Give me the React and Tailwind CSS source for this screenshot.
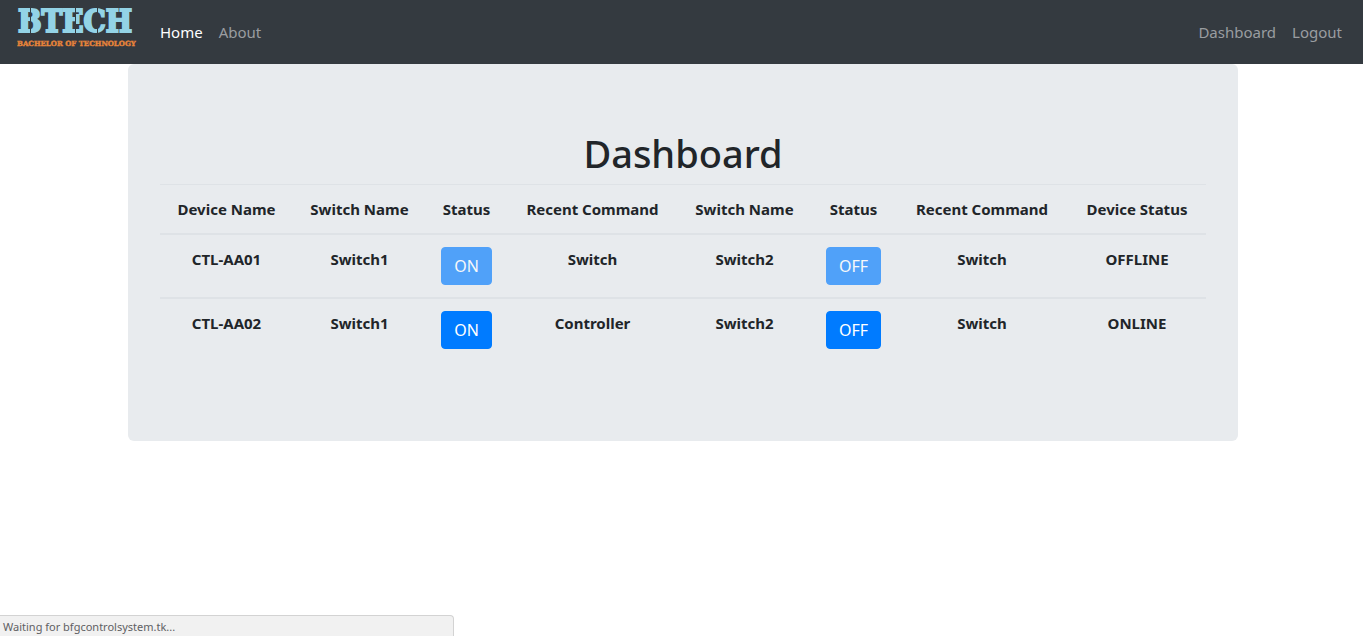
import React from "react";

const devices = [
  {
    name: "CTL-AA01",
    status: "OFFLINE",
    switches: [
      { name: "Switch1", state: "ON", recent: "Switch" },
      { name: "Switch2", state: "OFF", recent: "Switch" },
    ],
  },
  {
    name: "CTL-AA02",
    status: "ONLINE",
    switches: [
      { name: "Switch1", state: "ON", recent: "Controller" },
      { name: "Switch2", state: "OFF", recent: "Switch" },
    ],
  },
];

const headings = [
  "Device Name",
  "Switch Name",
  "Status",
  "Recent Command",
  "Switch Name",
  "Status",
  "Recent Command",
  "Device Status",
];

function Logo() {
  return (
    <svg className="block h-12 w-[120px] overflow-visible" viewBox="0 0 120 48" role="img" aria-label="BTECH Bachelor of Technology">
      <text
        x="2"
        y="28"
        fontSize="31"
        fontWeight="700"
        fontFamily="'DejaVu Serif Condensed', 'DejaVu Serif', serif"
        fill="#93d3e6"
        stroke="#93d3e6"
        strokeWidth="2"
      >
        BTECH
      </text>
      <path d="M14.500 3V31M59.500 3V31M81.500 3V11M81.500 23V31" stroke="#343a40" strokeWidth="1" />
      <text
        x="1"
        y="42"
        fontSize="7"
        fontWeight="700"
        fontFamily="'DejaVu Serif', serif"
        fill="#e8843a"
        stroke="#e8843a"
        strokeWidth="0.4"
      >
        BACHELOR OF TECHNOLOGY
      </text>
    </svg>
  );
}

function Navbar() {
  return (
    <nav className="flex min-h-16 items-center bg-[#343a40] pr-[13px] pl-4 text-[15px] leading-6">
      <a href="#home" className="mr-4 block pb-2">
        <Logo />
      </a>
      <div className="flex grow items-center justify-between">
        <ul className="flex">
          <li><a href="#home" className="block px-2 py-2 text-white">Home</a></li>
          <li><a href="#about" className="block px-2 py-2 text-[#9a9da0]">About</a></li>
        </ul>
        <ul className="flex">
          <li><a href="#dashboard" className="block px-2 py-2 text-[#9a9da0]">Dashboard</a></li>
          <li><a href="#logout" className="block px-2 py-2 text-[#9a9da0]">Logout</a></li>
        </ul>
      </div>
    </nav>
  );
}

function SwitchButton({ children, disabled }) {
  return (
    <button
      type="button"
      disabled={disabled}
      className="rounded border border-[#007bff] bg-[#007bff] px-3 py-1.5 text-base font-normal text-white disabled:opacity-65"
    >
      {children}
    </button>
  );
}

function DeviceRow({ device }) {
  return (
    <tr className="border-t-2 border-[#dee2e6] align-top">
      <th scope="row" className="py-3">{device.name}</th>
      {device.switches.map((s) => (
        <React.Fragment key={s.name}>
          <td className="py-3">{s.name}</td>
          <td className="py-3">
            <SwitchButton disabled={device.status === "OFFLINE"}>{s.state}</SwitchButton>
          </td>
          <td className="py-3">{s.recent}</td>
        </React.Fragment>
      ))}
      <td className="py-3">{device.status}</td>
    </tr>
  );
}

export default function App() {
  return (
    <div className="min-h-screen bg-white font-['Segoe_UI','Noto_Sans',sans-serif] text-base text-[#212529]">
      <Navbar />
      <main className="pl-[3px]">
        <section className="mx-auto max-w-[1110px] rounded-md bg-[#e8ebee] px-8 pt-[65px] pb-20">
          <h1 className="mb-[7px] text-center text-[38px] leading-12 font-medium">Dashboard</h1>
          <div className="overflow-x-auto">
            <table className="w-full min-w-[1000px] table-fixed border-collapse text-center text-[15px] leading-6 font-bold">
              <colgroup>
                <col className="w-[133px]" />
                <col className="w-[133px]" />
                <col className="w-[81px]" />
                <col className="w-[171px]" />
                <col className="w-[133px]" />
                <col className="w-[85px]" />
                <col className="w-[172px]" />
                <col className="w-[138px]" />
              </colgroup>
              <thead>
                <tr className="border-t border-[#dee2e6]">
                  {headings.map((h, i) => (
                    <th key={i} scope="col" className="py-3">{h}</th>
                  ))}
                </tr>
              </thead>
              <tbody>
                {devices.map((d) => (
                  <DeviceRow key={d.name} device={d} />
                ))}
              </tbody>
            </table>
          </div>
        </section>
      </main>
      <div
        role="status"
        className="fixed bottom-0 left-0 w-[454px] rounded-tr border-t border-r border-[#d3d3d3] bg-[#f1f1f1] px-[3px] pt-[3px] pb-px text-[11px] leading-4 text-[#5f6063]"
      >
        Waiting for bfgcontrolsystem.tk...
      </div>
    </div>
  );
}
